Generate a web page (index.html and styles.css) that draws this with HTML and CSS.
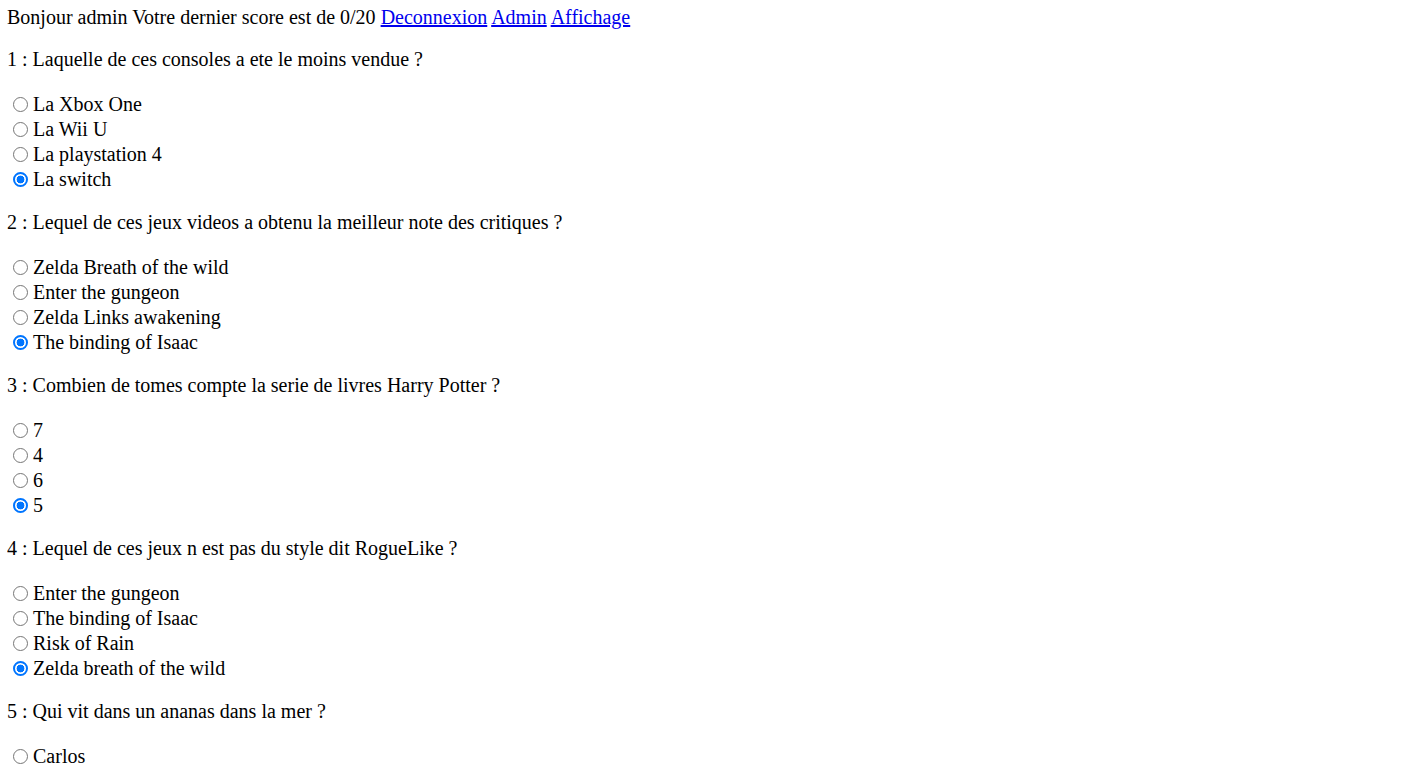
FILE: index.html
```html
<!DOCTYPE html>
<html>
<head>
<meta charset="utf-8">
<link rel="stylesheet" href="styles.css">
</head>
<body>
<div class="top">Bonjour admin Votre dernier score est de 0/20 <a href="#">Deconnexion</a> <a href="#">Admin</a> <a href="#">Affichage</a></div>

<p class="q">1 : Laquelle de ces consoles a ete le moins vendue ?</p>
<div class="opts">
<label class="opt"><input type="radio" name="q1">La Xbox One</label>
<label class="opt"><input type="radio" name="q1">La Wii U</label>
<label class="opt"><input type="radio" name="q1">La playstation 4</label>
<label class="opt"><input type="radio" name="q1" checked>La switch</label>
</div>

<p class="q">2 : Lequel de ces jeux videos a obtenu la meilleur note des critiques ?</p>
<div class="opts">
<label class="opt"><input type="radio" name="q2">Zelda Breath of the wild</label>
<label class="opt"><input type="radio" name="q2">Enter the gungeon</label>
<label class="opt"><input type="radio" name="q2">Zelda Links awakening</label>
<label class="opt"><input type="radio" name="q2" checked>The binding of Isaac</label>
</div>

<p class="q">3 : Combien de tomes compte la serie de livres Harry Potter ?</p>
<div class="opts">
<label class="opt"><input type="radio" name="q3">7</label>
<label class="opt"><input type="radio" name="q3">4</label>
<label class="opt"><input type="radio" name="q3">6</label>
<label class="opt"><input type="radio" name="q3" checked>5</label>
</div>

<p class="q">4 : Lequel de ces jeux n est pas du style dit RogueLike ?</p>
<div class="opts">
<label class="opt"><input type="radio" name="q4">Enter the gungeon</label>
<label class="opt"><input type="radio" name="q4">The binding of Isaac</label>
<label class="opt"><input type="radio" name="q4">Risk of Rain</label>
<label class="opt"><input type="radio" name="q4" checked>Zelda breath of the wild</label>
</div>

<p class="q">5 : Qui vit dans un ananas dans la mer ?</p>
<div class="opts">
<label class="opt"><input type="radio" name="q5">Carlos</label>
</div>
</body>
</html>
```

FILE: styles.css
```css
body {
  margin: 8px 8px 8px 7px;
  font-family: "Liberation Serif", "Times New Roman", serif;
  font-size: 20px;
  color: #000;
  background: #fff;
}
a { color: #0000ee; }
.top {
  line-height: 21px;
  margin-top: -1px;
  padding-bottom: 1px;
}
.q {
  margin: 20px 0 22px;
  line-height: 21px;
}
.opts {
  display: flex;
  flex-direction: column;
}
.opt {
  display: flex;
  align-items: center;
  height: 25px;
}
.opt input {
  appearance: none;
  -webkit-appearance: none;
  box-sizing: border-box;
  width: 15px;
  height: 15px;
  margin: 0 5px 0 6px;
  border: 1px solid #767676;
  border-radius: 50%;
  background: #fff;
}
.opt input:checked {
  border: 2px solid #0075ff;
  background: radial-gradient(circle, #0075ff 0 3.6px, #fff 4.2px);
}
```
